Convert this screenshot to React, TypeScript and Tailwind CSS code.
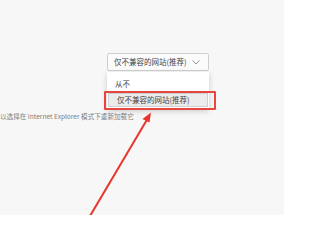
import { FC } from 'react';

const font = { fontFamily: '"Noto Sans CJK SC", "Noto Sans", sans-serif' };

const App: FC = () => {
  return (
    <div className="relative w-[284px] h-[215px] overflow-hidden bg-[#f7f7f7]" style={font}>
      <div className="pt-[53px] pl-[107px]">
        <div className="w-[102px] h-[18px] flex items-center justify-between pl-[6px] pr-[8px] bg-[#fbfbfb] border border-[#cfcfcf] rounded-[2px]">
          <span className="text-[7.5px] leading-none text-[#444]">仅不兼容的网站(推荐)</span>
          <svg width="8" height="5" viewBox="0 0 8 5" fill="none">
            <path d="M0.5 0.5 L4 4 L7.5 0.5" stroke="#777" strokeWidth="0.8" />
          </svg>
        </div>
      </div>

      <div className="mt-[42px] text-[6.6px] leading-none text-[#808080] whitespace-nowrap">
        以选择在 Internet Explorer 模式下重新加载它
      </div>

      {/* dropdown menu */}
      <div className="absolute left-[107px] top-[72px] w-[102px] h-[37px] bg-white shadow-[0_2px_6px_rgba(0,0,0,0.18)] flex flex-col px-[1px] pt-[4px]">
        <div className="h-[16px] flex items-center pl-[7px] text-[7.5px] leading-none text-[#444]">从不</div>
        <div className="mt-[1px] h-[14px] flex items-center pl-[8px] bg-[#ececec] border border-[#cfcfcf] text-[7.5px] leading-none text-[#444]">
          仅不兼容的网站(推荐)
        </div>
      </div>

      {/* red highlight box */}
      <div className="absolute left-[104px] top-[91px] w-[112px] h-[19px] border-2 border-[#e8453c] rounded-[1px]" />

      {/* red arrow */}
      <svg className="absolute left-0 top-0" width="284" height="215" viewBox="0 0 284 215">
        <line x1="90" y1="216" x2="148" y2="118" stroke="#e8352b" strokeWidth="2" />
        <path d="M151 112.5 L142.5 119 L149.5 122.5 Z" fill="#e8352b" />
      </svg>
    </div>
  );
};

export default App;
